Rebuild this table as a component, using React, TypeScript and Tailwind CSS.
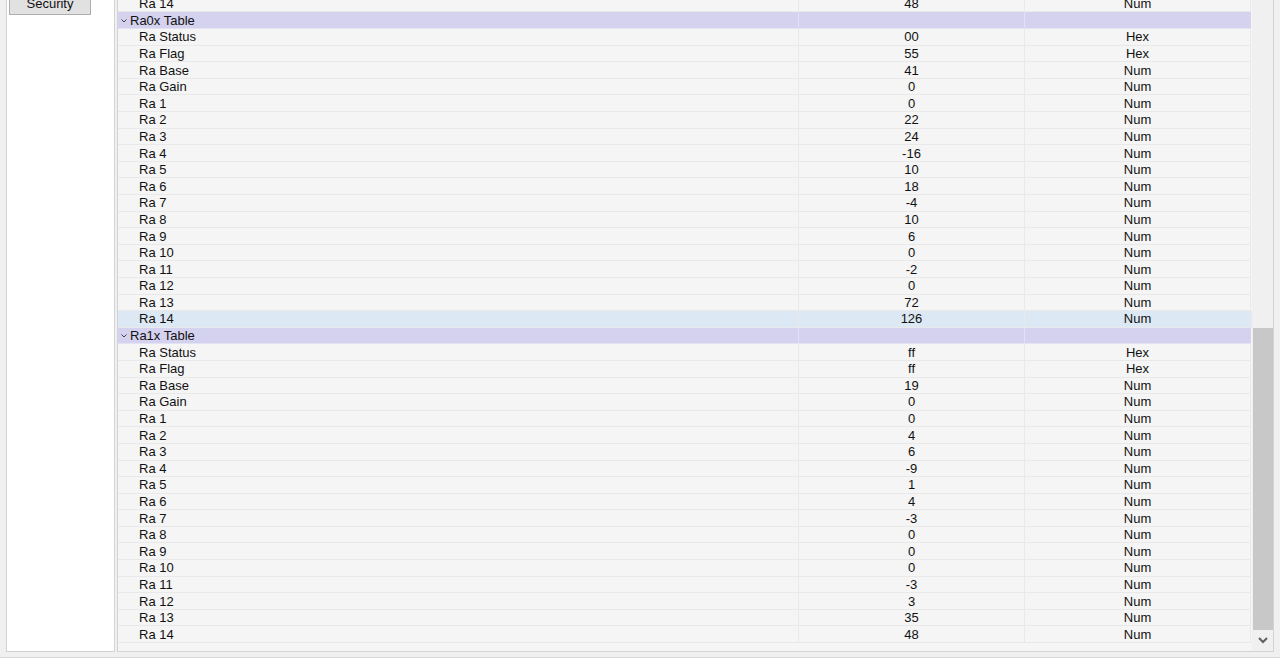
type Row = {name: string; value: string; kind: 'Hex' | 'Num'; selected?: boolean}

const ra0x: Row[] = [
  {name: 'Ra Status', value: '00', kind: 'Hex'},
  {name: 'Ra Flag', value: '55', kind: 'Hex'},
  {name: 'Ra Base', value: '41', kind: 'Num'},
  {name: 'Ra Gain', value: '0', kind: 'Num'},
  {name: 'Ra 1', value: '0', kind: 'Num'},
  {name: 'Ra 2', value: '22', kind: 'Num'},
  {name: 'Ra 3', value: '24', kind: 'Num'},
  {name: 'Ra 4', value: '-16', kind: 'Num'},
  {name: 'Ra 5', value: '10', kind: 'Num'},
  {name: 'Ra 6', value: '18', kind: 'Num'},
  {name: 'Ra 7', value: '-4', kind: 'Num'},
  {name: 'Ra 8', value: '10', kind: 'Num'},
  {name: 'Ra 9', value: '6', kind: 'Num'},
  {name: 'Ra 10', value: '0', kind: 'Num'},
  {name: 'Ra 11', value: '-2', kind: 'Num'},
  {name: 'Ra 12', value: '0', kind: 'Num'},
  {name: 'Ra 13', value: '72', kind: 'Num'},
  {name: 'Ra 14', value: '126', kind: 'Num', selected: true},
]

const ra1x: Row[] = [
  {name: 'Ra Status', value: 'ff', kind: 'Hex'},
  {name: 'Ra Flag', value: 'ff', kind: 'Hex'},
  {name: 'Ra Base', value: '19', kind: 'Num'},
  {name: 'Ra Gain', value: '0', kind: 'Num'},
  {name: 'Ra 1', value: '0', kind: 'Num'},
  {name: 'Ra 2', value: '4', kind: 'Num'},
  {name: 'Ra 3', value: '6', kind: 'Num'},
  {name: 'Ra 4', value: '-9', kind: 'Num'},
  {name: 'Ra 5', value: '1', kind: 'Num'},
  {name: 'Ra 6', value: '4', kind: 'Num'},
  {name: 'Ra 7', value: '-3', kind: 'Num'},
  {name: 'Ra 8', value: '0', kind: 'Num'},
  {name: 'Ra 9', value: '0', kind: 'Num'},
  {name: 'Ra 10', value: '0', kind: 'Num'},
  {name: 'Ra 11', value: '-3', kind: 'Num'},
  {name: 'Ra 12', value: '3', kind: 'Num'},
  {name: 'Ra 13', value: '35', kind: 'Num'},
  {name: 'Ra 14', value: '48', kind: 'Num'},
]

function DataRow({row}: {row: Row}) {
  return (
    <div className={`flex h-[16.6px] shrink-0 border-b border-[#e9e9e9] ${row.selected ? 'bg-[#dce9f5] w-[1135px]' : 'bg-[#f5f5f5] w-[1133px]'}`}>
      <div className="flex w-[681px] items-center border-r border-[#e9e9e9] pl-[21px]">{row.name}</div>
      <div className="flex w-[226px] items-center justify-center border-r border-[#e9e9e9]">{row.value}</div>
      <div className="flex w-[226px] items-center justify-center border-r border-[#e9e9e9]">{row.kind}</div>
    </div>
  )
}

function GroupRow({title}: {title: string}) {
  return (
    <div className="flex h-[16.6px] w-[1133px] shrink-0 border-b border-[#e4e3f3] bg-[#d4d2ef]">
      <div className="flex w-[681px] items-center gap-[3px] border-r border-[#e1e0f4] pl-[3px]">
        <svg width="6" height="4" viewBox="0 0 6 4" className="mt-[1px]">
          <path d="M0.5 0.5 L3 3 L5.5 0.5" fill="none" stroke="#444" strokeWidth="1" />
        </svg>
        <span>{title}</span>
      </div>
      <div className="w-[226px] border-r border-[#e1e0f4]"></div>
      <div className="w-[226px]"></div>
    </div>
  )
}

export default function App() {
  return (
    <div className="flex h-[660px] w-[1280px] flex-col overflow-hidden bg-[#f0f0f0] font-['Liberation_Sans',Arial,sans-serif] text-[13px] leading-none text-[#111]">
      <div className="-mt-[20px] flex h-[672px] shrink-0 gap-[2px] pl-[6px] pr-[6px]">
        <div className="w-[109px] shrink-0 border border-[#d3d3d3] bg-white pl-[2px] pt-[10px]">
          <button className="flex h-[24px] w-[82px] items-end justify-center border border-[#adadad] bg-[#e1e1e1] pb-[4px] text-[13px] text-[#111]">
            Security
          </button>
        </div>
        <div className="flex w-[1157px] shrink-0 border border-[#d3d3d3] bg-[#f5f5f5]">
          <div className="flex-1 overflow-hidden">
            <div className="mt-[14.9px] flex flex-col">
              <DataRow row={{name: 'Ra 14', value: '48', kind: 'Num'}} />
              <GroupRow title="Ra0x Table" />
              {ra0x.map((row, i) => (
                <DataRow key={'a' + i} row={row} />
              ))}
              <GroupRow title="Ra1x Table" />
              {ra1x.map((row, i) => (
                <DataRow key={'b' + i} row={row} />
              ))}
            </div>
          </div>
          <div className="flex w-[21px] shrink-0 flex-col bg-[#f0f0f0] pl-[1px]">
            <div className="h-[347px] shrink-0"></div>
            <div className="h-[302px] shrink-0 bg-[#c8c8c8]"></div>
            <div className="flex flex-1 items-center justify-center">
              <svg width="10" height="7" viewBox="0 0 10 7">
                <path d="M1 1 L5 5 L9 1" fill="none" stroke="#606060" strokeWidth="2" />
              </svg>
            </div>
          </div>
        </div>
      </div>
      <div className="mt-[5px] flex-1 border-t border-[#d8d8d8] bg-white"></div>
    </div>
  )
}
